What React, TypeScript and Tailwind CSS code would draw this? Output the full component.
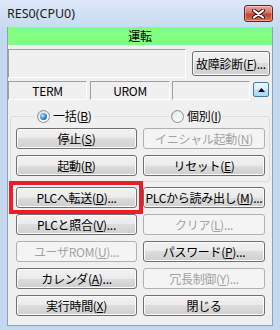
import * as React from "react";

/* mnemonic label: 停止(S) with the key underlined */
function M({ t, k, tail = "" }: { t: string; k: string; tail?: string }) {
	return (
		<span className="whitespace-nowrap">
			{t}(<span className="underline underline-offset-[1px]">{k}</span>){tail}
		</span>
	);
}

function Btn({
	children,
	disabled = false,
}: {
	children: React.ReactNode;
	disabled?: boolean;
}) {
	if (disabled) {
		return (
			<div className="flex h-[21px] items-center justify-center whitespace-nowrap rounded-[3px] border border-[#adb2b5] bg-[#f4f4f4] leading-[19px] text-[#a3a3a3]">
				{children}
			</div>
		);
	}
	return (
		<div className="flex h-[21px] items-center justify-center whitespace-nowrap rounded-[3px] border border-[#707070] bg-[linear-gradient(#f2f2f2_0%,#ebebeb_50%,#dddddd_50%,#cfcfcf_100%)] leading-[19px] text-black shadow-[inset_0_0_0_1px_#fbfbfb]">
			{children}
		</div>
	);
}

function Radio({ checked }: { checked?: boolean }) {
	return (
		<span className="relative inline-block h-[13px] w-[13px] shrink-0 rounded-full border border-[#8e8f8f] bg-[linear-gradient(135deg,#d4d4d4,#f7f7f7_70%)]">
			<span className="absolute left-[1px] top-[1px] h-[9px] w-[9px] rounded-full bg-[linear-gradient(135deg,#e9e9e9,#ffffff)]" />
			{checked && (
				<span className="absolute left-[2px] top-[2px] h-[7px] w-[7px] rounded-full bg-[radial-gradient(circle_at_35%_35%,#b9e1ff,#2f7fd0_60%,#1b4f8c)]" />
			)}
		</span>
	);
}

function StatBox({ w, children }: { w: string; children?: React.ReactNode }) {
	return (
		<div
			className={`flex h-[19px] items-center justify-center border border-b-white border-l-[#a0a0a0] border-r-white border-t-[#a0a0a0] leading-[17px] ${w}`}>
			{children}
		</div>
	);
}

export default function App() {
	return (
		<div className="relative flex h-[330px] w-[280px] flex-col overflow-hidden bg-[#c4d8ef] font-['MS_UI_Gothic','Noto_Sans_CJK_JP',sans-serif] text-[12px] tracking-[-0.3px] text-black">
			{/* title bar */}
			<div className="flex h-[27px] shrink-0 items-start bg-[linear-gradient(#dce8f6,#c8dbf0)] pl-[7px]">
				<span className="mt-[6px] font-['Noto_Sans',sans-serif] text-[12.5px] leading-[15px] tracking-normal text-[#1b1b1b]">
					RES0(CPU0)
				</span>
				<div className="ml-auto mr-[7px] mt-[5px] flex h-[17px] w-[29px] items-center justify-center rounded-[3px] border border-[#5e2626] bg-[linear-gradient(#e9a99c,#d47566_45%,#c5402f_55%,#d9755a)] shadow-[inset_0_0_0_1px_rgba(255,255,255,0.35)]">
					<svg width="13" height="10" viewBox="0 0 13 10" aria-hidden="true">
						<path
							d="M2 1.5 L11 8.5 M11 1.5 L2 8.5"
							stroke="#3a1111"
							strokeWidth="4"
							strokeLinecap="round"
						/>
						<path
							d="M2 1.5 L11 8.5 M11 1.5 L2 8.5"
							stroke="#ffffff"
							strokeWidth="2.2"
							strokeLinecap="round"
						/>
					</svg>
				</div>
			</div>

			{/* client area */}
			<div className="mx-[7px] flex h-[299px] shrink-0 flex-col border border-t-0 border-[#8ca3bf] bg-[#f0f0f0]">
				{/* run state */}
				<div className="flex h-[18px] items-center justify-center bg-[#80ff80] leading-[18px]">
					運転
				</div>

				{/* message + diagnostics */}
				<div className="mt-[4px] flex h-[29px]">
					<div className="h-full w-[178px] border border-b-white border-l-[#a0a0a0] border-r-white border-t-[#a0a0a0]" />
					<div className="ml-[6px] mt-[2px] w-[78px] [&>div]:h-[25px]">
						<Btn>
							<M t="故障診断" k="F" tail="..." />
						</Btn>
					</div>
				</div>

				{/* status row */}
				<div className="mt-[3px] flex h-[19px] items-start">
					<StatBox w="w-[79px]">TERM</StatBox>
					<div className="ml-[3px]">
						<StatBox w="w-[80px]">UROM</StatBox>
					</div>
					<div className="ml-[2px]">
						<StatBox w="w-[78px]" />
					</div>
					<div className="ml-[3px] mt-[1px] flex h-[15px] w-[16px] items-center justify-center rounded-[2px] border border-[#3c7fb1] bg-[linear-gradient(#eaf6fd,#d9f0fc_50%,#bee6fd_50%,#a7d9f5)]">
						<svg width="7" height="4" viewBox="0 0 7 4" aria-hidden="true">
							<path d="M0 4 L3.5 0 L7 4 Z" fill="#000" />
						</svg>
					</div>
				</div>

				{/* group: batch / individual */}
				<div className="relative ml-[2px] mt-[16px] w-[260px] rounded-[3px] border border-[#d5dfe5] pb-[5px] pl-[5px] pr-[4px] pt-[11px]">
					<div className="absolute left-[24px] top-[-8px] flex h-[14px] items-center gap-[3px] bg-[#f0f0f0] px-[2px] leading-[14px]">
						<Radio checked />
						<M t="一括" k="B" />
					</div>
					<div className="absolute left-[158px] top-[-8px] flex h-[14px] items-center gap-[3px] bg-[#f0f0f0] px-[2px] leading-[14px]">
						<Radio />
						<M t="個別" k="I" />
					</div>
					<div className="grid grid-cols-[121px_122px] gap-x-[6px] gap-y-[6px]">
						<Btn>
							<M t="停止" k="S" />
						</Btn>
						<Btn disabled>
							<M t="イニシャル起動" k="N" />
						</Btn>
						<Btn>
							<M t="起動" k="R" />
						</Btn>
						<Btn>
							<M t="リセット" k="E" />
						</Btn>
					</div>
				</div>

				{/* command buttons */}
				<div className="mt-[5px] grid grid-cols-[121px_122px] gap-x-[6px] gap-y-[6px] pl-[8px]">
					<Btn>
						<M t="PLCへ転送" k="D" tail="..." />
					</Btn>
					<Btn>
						<M t="PLCから読み出し" k="M" tail="..." />
					</Btn>
					<Btn>
						<M t="PLCと照合" k="V" tail="..." />
					</Btn>
					<Btn disabled>
						<M t="クリア" k="L" tail="..." />
					</Btn>
					<Btn disabled>
						<M t="ユーザROM" k="U" tail="..." />
					</Btn>
					<Btn>
						<M t="パスワード" k="P" tail="..." />
					</Btn>
					<Btn>
						<M t="カレンダ" k="A" tail="..." />
					</Btn>
					<Btn disabled>
						<M t="冗長制御" k="Y" tail="..." />
					</Btn>
					<Btn>
						<M t="実行時間" k="X" />
					</Btn>
					<Btn>閉じる</Btn>
				</div>
			</div>

			{/* red highlight annotation */}
			<div className="pointer-events-none absolute left-[9px] top-[181px] h-[33px] w-[134px] border-[4px] border-[#ee1c25]" />
		</div>
	);
}
